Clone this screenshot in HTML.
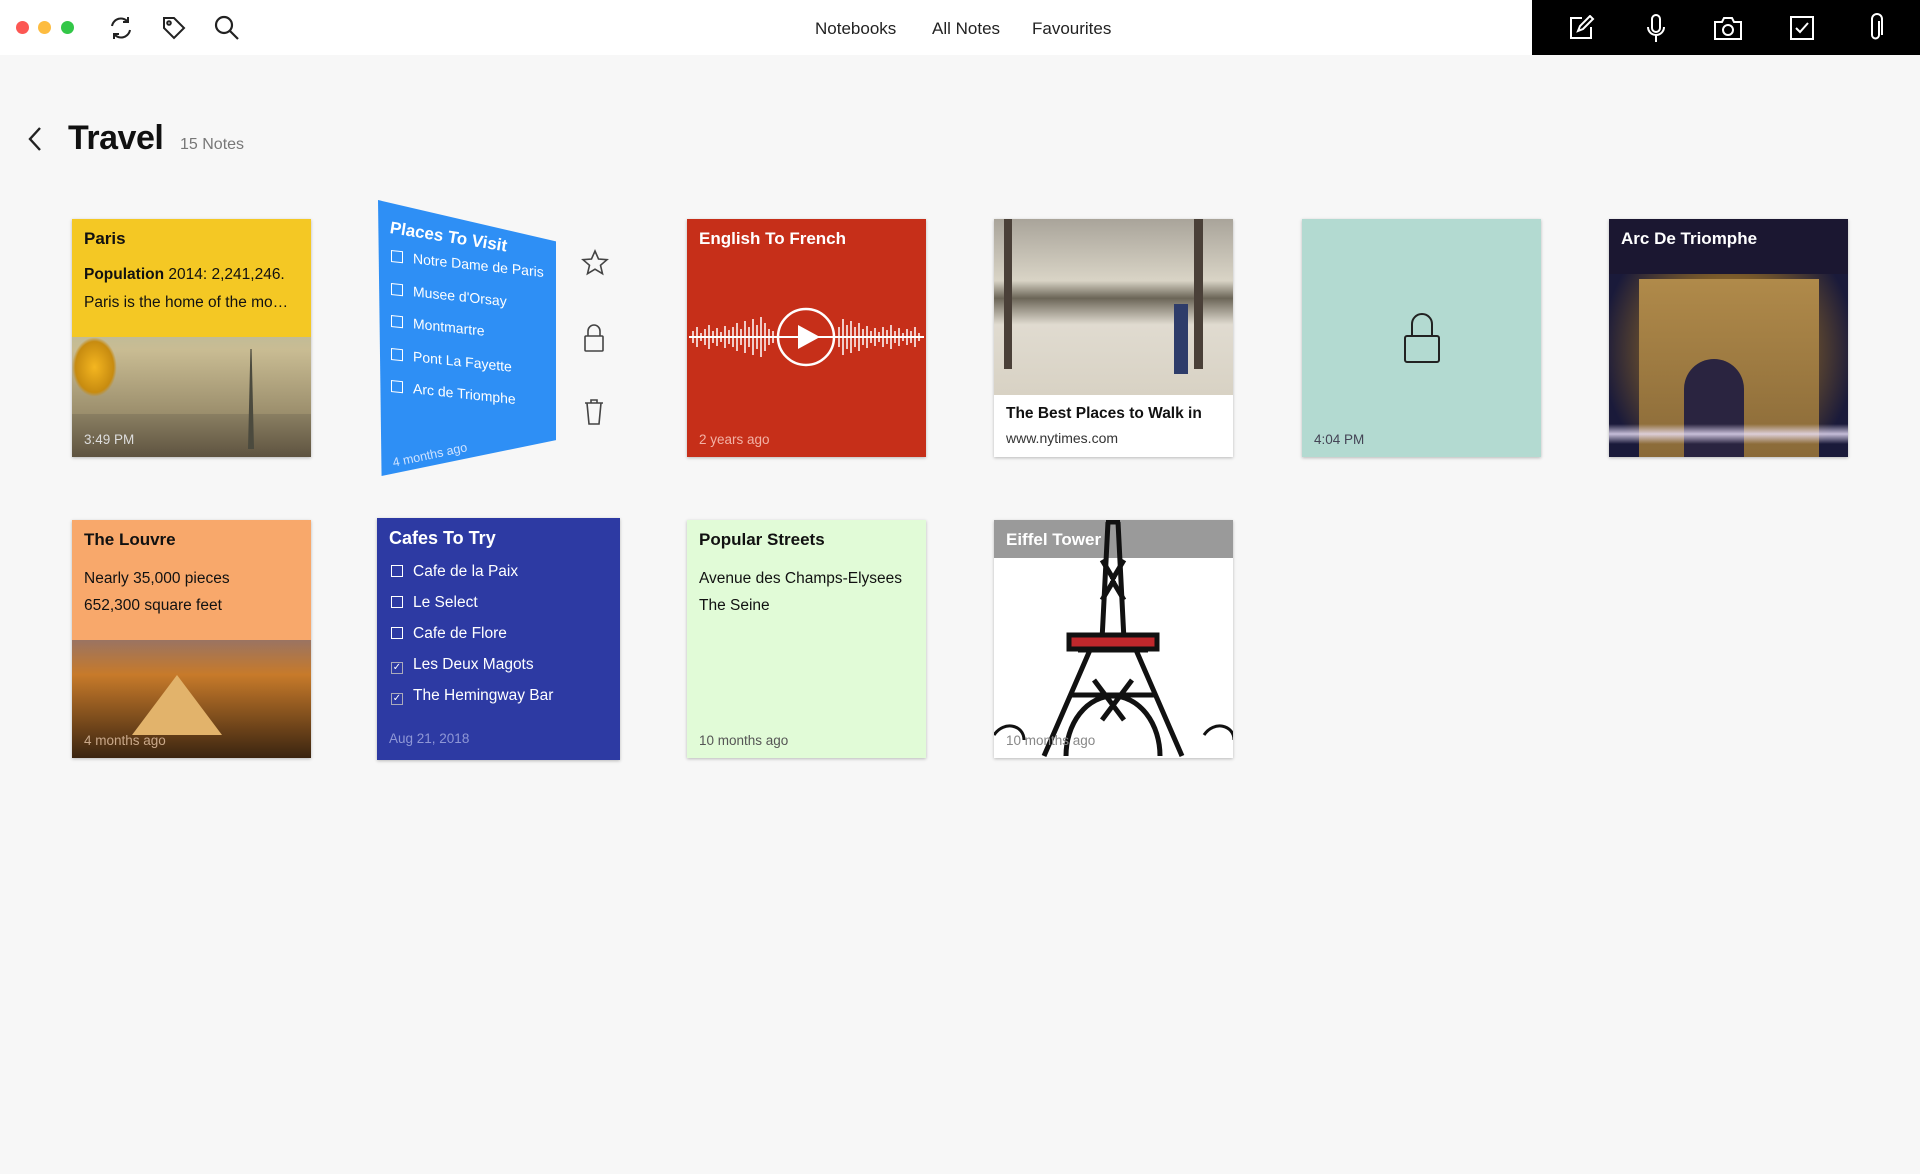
<!DOCTYPE html>
<html><head><meta charset="utf-8"><style>
*{margin:0;padding:0;box-sizing:border-box}
body{width:1920px;height:1174px;background:#f7f7f7;font-family:"Liberation Sans",sans-serif;position:relative;overflow:hidden;color:#111}
.top{position:absolute;left:0;top:0;width:1920px;height:55px;background:#fff}
.blk{position:absolute;left:1532px;top:0;width:388px;height:55px;background:#000}
.dot{position:absolute;top:21px;width:13px;height:13px;border-radius:50%}
.nav{position:absolute;top:19px;font-size:17px;color:#222}
.card{position:absolute;width:239px;height:238px;overflow:hidden;box-shadow:0 1px 3px rgba(0,0,0,.25)}
.t{position:absolute;left:12px;top:10px;font-size:17px;font-weight:bold}
.tx{position:absolute;left:12px;font-size:15.5px}
.d{position:absolute;left:12px;bottom:10px;font-size:13.5px}
.cb{display:inline-block;width:12px;height:12px;border:1.5px solid #fff;margin-right:10px;vertical-align:-1px;font-size:10px;line-height:9px;text-align:center}
</style></head><body>
<div class="top"></div>
<div class="dot" style="left:16px;background:#fc5753"></div>
<div class="dot" style="left:38px;background:#fdbc40"></div>
<div class="dot" style="left:61px;background:#33c748"></div>
<svg style="position:absolute;left:108px;top:15px" width="26" height="26" viewBox="0 0 26 26" fill="none" stroke="#222" stroke-width="2"><path d="M4 11a9 9 0 0 1 16-4M22 15a9 9 0 0 1-16 4"/><path d="M20 2v5h-5M6 24v-5h5"/></svg>
<svg style="position:absolute;left:161px;top:15px" width="26" height="26" viewBox="0 0 26 26" fill="none" stroke="#222" stroke-width="2"><path d="M3 3h10l10 10-10 10L3 13z"/><circle cx="8" cy="8" r="1.8"/></svg>
<svg style="position:absolute;left:213px;top:14px" width="28" height="28" viewBox="0 0 28 28" fill="none" stroke="#222" stroke-width="2.2"><circle cx="11" cy="11" r="8"/><path d="M17 17l8 8"/></svg>
<div class="nav" style="left:815px">Notebooks</div>
<div class="nav" style="left:932px">All Notes</div>
<div class="nav" style="left:1032px">Favourites</div>
<div class="blk"></div>
<svg style="position:absolute;left:1568px;top:15px" width="28" height="26" viewBox="0 0 28 26" fill="none" stroke="#fff" stroke-width="2"><path d="M14 3H3v20h20V12"/><path d="M10 16l2-5 10-10 3 3-10 10z"/></svg>
<svg style="position:absolute;left:1645px;top:13px" width="22" height="30" viewBox="0 0 22 30" fill="none" stroke="#fff" stroke-width="2"><rect x="7" y="2" width="8" height="17" rx="4"/><path d="M3 14a8 8 0 0 0 16 0M11 22v7"/></svg>
<svg style="position:absolute;left:1713px;top:15px" width="30" height="26" viewBox="0 0 30 26" fill="none" stroke="#fff" stroke-width="2"><path d="M2 7h7l2-4h8l2 4h7v17H2z"/><circle cx="15" cy="15" r="5"/></svg>
<svg style="position:absolute;left:1789px;top:15px" width="26" height="26" viewBox="0 0 26 26" fill="none" stroke="#fff" stroke-width="2"><rect x="2" y="2" width="22" height="22"/><path d="M7 13l4 4 8-9"/></svg>
<svg style="position:absolute;left:1867px;top:13px" width="18" height="30" viewBox="0 0 18 30" fill="none" stroke="#fff" stroke-width="2"><path d="M12 8v14a3.5 3.5 0 0 1-7 0V6a5 5 0 0 1 10 0v16"/></svg>

<svg style="position:absolute;left:26px;top:126px" width="18" height="26" viewBox="0 0 18 26" fill="none" stroke="#222" stroke-width="2.4"><path d="M14 2L4 13l10 11"/></svg>
<div style="position:absolute;left:68px;top:119px;font-size:34px;font-weight:bold;letter-spacing:-0.5px">Travel</div>
<div style="position:absolute;left:180px;top:136px;font-size:16px;color:#777">15 Notes</div>

<!-- Paris -->
<div class="card" style="left:72px;top:219px;background:linear-gradient(#7fb4b8,#c9bc93 55%,#7c6f52)">
<div style="position:absolute;left:0;top:0;width:239px;height:118px;background:#f4c824"></div>
<div style="position:absolute;left:0;top:118px;width:45px;height:60px;background:radial-gradient(#f4b620,#c78b10 60%,transparent 70%)"></div>
<div style="position:absolute;left:0;top:195px;width:239px;height:43px;background:linear-gradient(#8a7f62,#5e5340)"></div>
<div style="position:absolute;left:176px;top:130px;width:6px;height:100px;background:#4b4a3e;clip-path:polygon(40% 0,60% 0,100% 100%,0 100%)"></div>
<div class="t">Paris</div>
<div class="tx" style="top:47px"><b>Population</b> 2014: 2,241,246.</div>
<div class="tx" style="top:75px">Paris is the home of the mo…</div>
<div class="d" style="color:#ddd">3:49 PM</div>
</div>

<!-- Places to visit -->
<div style="position:absolute;left:378px;top:200px;width:178px;height:276px;background:#2e8ff5;clip-path:polygon(0 0,100% 15%,100% 87%,2% 100%);color:#fff">
<div style="position:absolute;left:12px;top:18px;font-size:17px;font-weight:bold;transform:rotate(9deg);transform-origin:left">Places To Visit</div>
<div style="position:absolute;left:13px;top:48px;font-size:14px;line-height:32.5px;transform:skewY(6deg)">
<div><span class="cb"></span>Notre Dame de Paris</div><div><span class="cb"></span>Musee d'Orsay</div><div><span class="cb"></span>Montmartre</div><div><span class="cb"></span>Pont La Fayette</div><div><span class="cb"></span>Arc de Triomphe</div></div>
<div style="position:absolute;left:14px;top:248px;font-size:12.5px;color:#cfe3ff;transform:rotate(-12deg)">4 months ago</div>
</div>
<svg style="position:absolute;left:581px;top:249px" width="28" height="28" viewBox="0 0 28 28" fill="none" stroke="#444" stroke-width="1.6"><path d="M14 2l3.5 8 8.5.7-6.5 5.6 2 8.4L14 20.2 6.5 24.7l2-8.4L2 10.7l8.5-.7z"/></svg>
<svg style="position:absolute;left:583px;top:323px" width="22" height="30" viewBox="0 0 22 30" fill="none" stroke="#444" stroke-width="1.6"><path d="M5 13V8a6 6 0 0 1 12 0v5"/><rect x="2" y="13" width="18" height="15" rx="1"/></svg>
<svg style="position:absolute;left:583px;top:398px" width="22" height="28" viewBox="0 0 22 28" fill="none" stroke="#444" stroke-width="1.6"><path d="M2 5h18M8 5V2h6v3M4 5l2 21h10l2-21"/></svg>

<!-- English -->
<div class="card" style="left:687px;top:219px;background:#c62f19;color:#fff">
<div class="t">English To French</div>
<svg style="position:absolute;left:0;top:88px" width="239" height="60" viewBox="0 0 239 60"><path d="M2 30h235" stroke="#fff" stroke-width="2"/><g stroke="#fff" stroke-width="1.5">
<path d="M6 24v12M10 20v20M14 26v8M18 22v16M22 18v24M26 24v12M30 21v18M34 25v10M38 19v22M42 23v14M46 20v20M50 16v28M54 22v16M58 14v32M62 20v20M66 12v36M70 18v24M74 10v40M78 16v28M82 22v16M86 24v12M152 20v20M156 12v36M160 18v24M164 14v32M168 20v20M172 16v28M176 22v16M180 19v22M184 24v12M188 21v18M192 25v10M196 20v20M200 23v14M204 18v24M208 24v12M212 21v18M216 26v8M220 22v16M224 24v12M228 20v20M232 26v8"/></g>
<circle cx="119" cy="30" r="28" fill="none" stroke="#fff" stroke-width="2.5"/><path d="M111 18l22 12-22 12z" fill="#fff"/></svg>
<div class="d" style="color:#f2b2a6">2 years ago</div>
</div>

<!-- NYT -->
<div class="card" style="left:994px;top:219px;background:#fff">
<div style="position:absolute;left:0;top:0;width:239px;height:176px;background:linear-gradient(#a9a49a,#d9d4c6 35%,#6b6557 45%,#e0dbd0 60%,#d8d2c4)"></div>
<div style="position:absolute;left:10px;top:0;width:8px;height:150px;background:#4a4038"></div>
<div style="position:absolute;left:200px;top:0;width:9px;height:150px;background:#4a4038"></div>
<div style="position:absolute;left:180px;top:85px;width:14px;height:70px;background:#2e3c6a"></div>
<div class="t" style="top:186px;font-size:15.5px">The Best Places to Walk in</div>
<div class="tx" style="top:211px;font-size:14px;color:#333">www.nytimes.com</div>
</div>

<!-- locked -->
<div class="card" style="left:1302px;top:219px;background:#b3dad1">
<svg style="position:absolute;left:101px;top:93px" width="38" height="52" viewBox="0 0 38 52" fill="none" stroke="#222" stroke-width="2"><path d="M9 24V12a10 10 0 0 1 20 0v12"/><rect x="2" y="24" width="34" height="26" rx="2"/></svg>
<div class="d" style="color:#445">4:04 PM</div>
</div>

<!-- Arc -->
<div class="card" style="left:1609px;top:219px;background:radial-gradient(ellipse at 50% 55%,#c49a55,#7a5a2a 40%,#1a1a3a 75%);color:#fff">
<div style="position:absolute;left:0;top:0;width:239px;height:55px;background:#1b1731"></div>
<div style="position:absolute;left:30px;top:60px;width:180px;height:178px;background:linear-gradient(#b08a4a,#8a6a38)"></div>
<div style="position:absolute;left:75px;top:140px;width:60px;height:98px;background:#2a2440;border-radius:30px 30px 0 0"></div>
<div style="position:absolute;left:0;top:205px;width:239px;height:20px;background:linear-gradient(#fff0,#f0e6ffcc,#fff0)"></div>
<div class="t">Arc De Triomphe</div>
</div>

<!-- Louvre -->
<div class="card" style="left:72px;top:520px;background:linear-gradient(#2c4b9a,#7a6f8a 40%,#c77a2a 65%,#3a2410)">
<div style="position:absolute;left:0;top:0;width:239px;height:120px;background:#f8a86b"></div>
<div style="position:absolute;left:60px;top:155px;width:90px;height:60px;background:#e2b36b;clip-path:polygon(50% 0,100% 100%,0 100%)"></div>
<div class="t">The Louvre</div>
<div class="tx" style="top:50px">Nearly 35,000 pieces</div>
<div class="tx" style="top:77px">652,300 square feet</div>
<div class="d" style="color:#c9a88a">4 months ago</div>
</div>

<!-- Cafes -->
<div class="card" style="left:377px;top:518px;width:243px;height:242px;background:#2d3aa3;color:#fff">
<div class="t" style="font-size:18px">Cafes To Try</div>
<div style="position:absolute;left:14px;top:38px;font-size:15.5px;line-height:31px">
<div><span class="cb"></span>Cafe de la Paix</div><div><span class="cb"></span>Le Select</div><div><span class="cb"></span>Cafe de Flore</div><div><span class="cb" style="border-color:#aab">✓</span>Les Deux Magots</div><div><span class="cb" style="border-color:#aab">✓</span>The Hemingway Bar</div></div>
<div class="d" style="color:#8f97d6;bottom:14px">Aug 21, 2018</div>
</div>

<!-- Popular -->
<div class="card" style="left:687px;top:520px;background:#e1fbd7">
<div class="t">Popular Streets</div>
<div class="tx" style="top:50px">Avenue des Champs-Elysees</div>
<div class="tx" style="top:77px">The Seine</div>
<div class="d" style="color:#555">10 months ago</div>
</div>

<!-- Eiffel -->
<div class="card" style="left:994px;top:520px;background:#fff">
<div style="position:absolute;left:0;top:0;width:239px;height:38px;background:#9a9a9a"></div>
<svg style="position:absolute;left:0;top:0" width="239" height="238" viewBox="0 0 239 238" fill="none" stroke="#111" stroke-width="5">
<path d="M112 2h14M114 2l-6 118M124 2l6 118M90 120h58M84 130h70"/><rect x="75" y="115" width="88" height="14" fill="#c0282c" stroke="#111"/>
<path d="M96 130L50 236M142 130l46 106M108 40l12 20M120 60l-12 20M130 40l-12 20M118 60l12 20M72 236a47 60 0 0 1 94 0M100 160l30 40M138 160l-30 40M75 175h88"/>
<path d="M0 215c10-15 30-10 30 5M210 215c10-15 30-10 30 5" stroke-width="3"/></svg>
<div class="t" style="color:#fff">Eiffel Tower</div>
<div class="d" style="color:#888">10 months ago</div>
</div>
</body></html>
